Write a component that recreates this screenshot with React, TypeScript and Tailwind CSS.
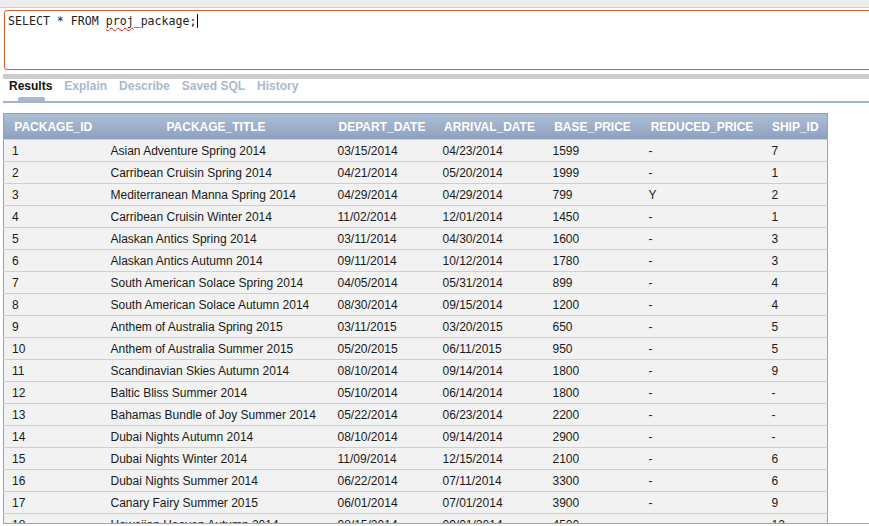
const rows: string[][] = [
  ['1', 'Asian Adventure Spring 2014', '03/15/2014', '04/23/2014', '1599', '-', '7'],
  ['2', 'Carribean Cruisin Spring 2014', '04/21/2014', '05/20/2014', '1999', '-', '1'],
  ['3', 'Mediterranean Manna Spring 2014', '04/29/2014', '04/29/2014', '799', 'Y', '2'],
  ['4', 'Carribean Cruisin Winter 2014', '11/02/2014', '12/01/2014', '1450', '-', '1'],
  ['5', 'Alaskan Antics Spring 2014', '03/11/2014', '04/30/2014', '1600', '-', '3'],
  ['6', 'Alaskan Antics Autumn 2014', '09/11/2014', '10/12/2014', '1780', '-', '3'],
  ['7', 'South American Solace Spring 2014', '04/05/2014', '05/31/2014', '899', '-', '4'],
  ['8', 'South American Solace Autumn 2014', '08/30/2014', '09/15/2014', '1200', '-', '4'],
  ['9', 'Anthem of Australia Spring 2015', '03/11/2015', '03/20/2015', '650', '-', '5'],
  ['10', 'Anthem of Australia Summer 2015', '05/20/2015', '06/11/2015', '950', '-', '5'],
  ['11', 'Scandinavian Skies Autumn 2014', '08/10/2014', '09/14/2014', '1800', '-', '9'],
  ['12', 'Baltic Bliss Summer 2014', '05/10/2014', '06/14/2014', '1800', '-', '-'],
  ['13', 'Bahamas Bundle of Joy Summer 2014', '05/22/2014', '06/23/2014', '2200', '-', '-'],
  ['14', 'Dubai Nights Autumn 2014', '08/10/2014', '09/14/2014', '2900', '-', '-'],
  ['15', 'Dubai Nights Winter 2014', '11/09/2014', '12/15/2014', '2100', '-', '6'],
  ['16', 'Dubai Nights Summer 2014', '06/22/2014', '07/11/2014', '3300', '-', '6'],
  ['17', 'Canary Fairy Summer 2015', '06/01/2014', '07/01/2014', '3900', '-', '9'],
  ['18', 'Hawaiian Heaven Autumn 2014', '08/15/2014', '09/01/2014', '4500', '-', '12'],
];

const columns = [
  { name: 'PACKAGE_ID', w: 'w-[99px]' },
  { name: 'PACKAGE_TITLE', w: 'w-[227px]' },
  { name: 'DEPART_DATE', w: 'w-[105px]' },
  { name: 'ARRIVAL_DATE', w: 'w-[110px]' },
  { name: 'BASE_PRICE', w: 'w-[96px]' },
  { name: 'REDUCED_PRICE', w: 'w-[123px]' },
  { name: 'SHIP_ID', w: 'w-[64px]' },
];

const tabs = ['Results', 'Explain', 'Describe', 'Saved SQL', 'History'];

export default function App() {
  return (
    <div className="w-[869px] h-[526px] overflow-hidden bg-white font-['Liberation_Sans',Arial,sans-serif] text-[12px] text-[#1a1a1a]">
      {/* top toolbar strip */}
      <div className="h-[8px] bg-[#eeeeee] border-b border-[#cdcdcd]"></div>

      {/* sql editor */}
      <div className="mt-[2px] ml-[4px] w-[900px] h-[60px] border border-[#e0592b] rounded-[3px] shadow-[0_0_1px_#f0a080] px-[3px] pt-[2px]">
        <div className="font-['DejaVu_Sans_Mono',monospace] text-[11.6px] leading-[16px] text-[#222] whitespace-pre">
          SELECT * FROM{' '}
          <span className="underline decoration-wavy decoration-[#e02020] decoration-[1px] underline-offset-[2px]">proj</span>
          _package;
          <span className="inline-block w-px h-[14px] bg-black ml-px align-[-3px]"></span>
        </div>
      </div>

      {/* splitter */}
      <div className="mt-[4px] ml-[3px] h-[5px] bg-[#cccccc]"></div>

      {/* tabs */}
      <div className="ml-[3px] flex h-[22px] items-start font-bold leading-[14px]">
        {tabs.map((t, i) => (
          <div key={t} className="relative px-[6px] h-full">
            <span className={i === 0 ? 'text-[#111]' : 'text-[#a9b8cc]'}>{t}</span>
            {i === 0 && (
              <div className="absolute left-[15px] top-[18px] w-[27px] h-[4px] rounded-t-[2px] bg-[#a8b7cb]"></div>
            )}
          </div>
        ))}
      </div>
      <div className="ml-[3px] h-[2px] bg-[#a3b3c8]"></div>

      {/* results grid */}
      <div className="mt-[10px] ml-[3px] h-[411px] overflow-hidden border-b border-[#a6a6a6]">
        <table className="border-collapse border border-[#a0a0a0] bg-[#f2f2f2] table-fixed">
          <thead>
            <tr className="h-[26px] bg-gradient-to-b from-[#aebfd5] to-[#8c9fbe]">
              {columns.map((c) => (
                <th key={c.name} className={`${c.w} text-center text-white font-bold px-[4px] whitespace-nowrap`}>
                  {c.name}
                </th>
              ))}
            </tr>
          </thead>
          <tbody>
            {rows.map((r) => (
              <tr key={r[0]} className="h-[22px] border-t border-[#cfcfcf]">
                {r.map((v, j) => (
                  <td key={j} className="pl-[8px] whitespace-nowrap text-left">
                    {v}
                  </td>
                ))}
              </tr>
            ))}
          </tbody>
        </table>
      </div>
    </div>
  );
}
